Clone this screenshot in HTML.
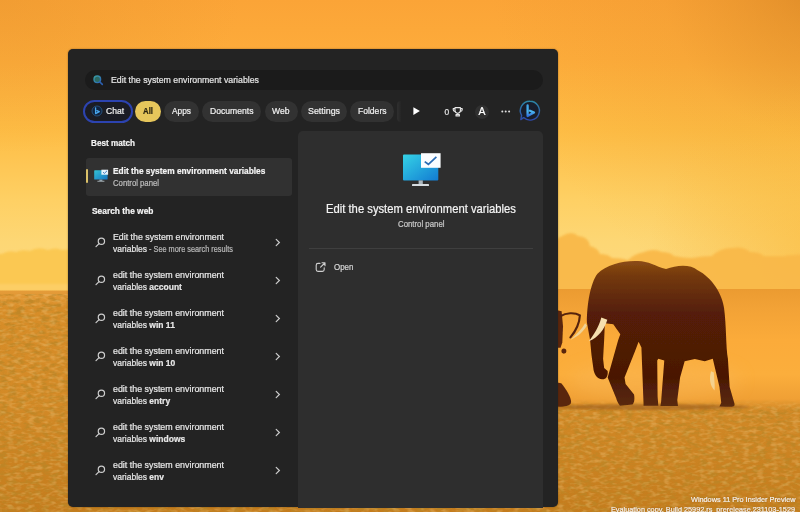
<!DOCTYPE html>
<html><head><meta charset="utf-8">
<style>
*{box-sizing:border-box;margin:0;padding:0}
html,body{width:800px;height:512px;overflow:hidden;background:#f6a638}
body{font-family:"Liberation Sans",sans-serif;position:relative;color:#fff}
#bg{position:absolute;left:0;top:0;width:800px;height:512px}
.a{position:absolute}
#panel{left:68.3px;top:49.3px;width:490.2px;height:458.2px;background:#232323;border-radius:5px;box-shadow:0 0 1.5px rgba(40,20,0,.6)}
#search{left:85px;top:70px;width:458px;height:19.5px;border-radius:10px;background:#1b1b1b}
.pill{top:101px;height:20.5px;border-radius:10.5px;background:#323232}
#right{left:298px;top:130.5px;width:245px;height:377px;background:#2e2e2e;border-radius:5px 5px 0 0}
#sel{left:85.5px;top:157.5px;width:206.5px;height:38px;background:#313131;border-radius:3px}
.t{position:absolute;white-space:nowrap;line-height:14px;transform-origin:0 50%;display:block;-webkit-text-stroke:.22px currentColor}
.t b{font-weight:bold}
#ui{position:absolute;left:0;top:0;width:800px;height:512px;filter:blur(.4px)}
.wm{position:absolute;right:4px;white-space:nowrap;font-size:8.6px;color:rgba(255,255,255,.85);text-shadow:0 0 2px rgba(90,50,0,.6);transform-origin:100% 50%;line-height:10px}
</style></head><body>
<svg id="bg" viewBox="0 0 800 512">
<defs>
<linearGradient id="sky" x1="0" y1="0" x2="0" y2="1">
<stop offset="0" stop-color="#fba437"/><stop offset="0.2" stop-color="#fdac3b"/><stop offset="0.445" stop-color="#febd45"/><stop offset="0.685" stop-color="#fed064"/><stop offset="0.83" stop-color="#fdd775"/><stop offset="1" stop-color="#fdd97f"/>
</linearGradient>
<linearGradient id="gnd" x1="0" y1="0" x2="0" y2="1">
<stop offset="0" stop-color="#e59c3a"/><stop offset="0.08" stop-color="#d78d28"/><stop offset="0.5" stop-color="#d38a27"/><stop offset="1" stop-color="#c47c1d"/>
</linearGradient>
<linearGradient id="dust" x1="0" y1="0" x2="0" y2="1">
<stop offset="0" stop-color="#eb9b31"/><stop offset="0.15" stop-color="#f2a236"/><stop offset="0.42" stop-color="#fbab3a"/><stop offset="0.7" stop-color="#fbae3c"/><stop offset="0.9" stop-color="#f0a035"/><stop offset="1" stop-color="#e89a34" stop-opacity="0"/>
</linearGradient>
<linearGradient id="dustx" x1="0" y1="0" x2="1" y2="0">
<stop offset="0" stop-color="#fff" stop-opacity="0"/><stop offset="0.12" stop-color="#fff" stop-opacity="1"/><stop offset="1" stop-color="#fff" stop-opacity="1"/>
</linearGradient>
<mask id="dm"><rect x="500" y="280" width="300" height="140" fill="url(#dustx)"/></mask>
<radialGradient id="cr" cx="830" cy="-30" r="340" gradientUnits="userSpaceOnUse"><stop offset="0" stop-color="#cc7c1e" stop-opacity=".68"/><stop offset="0.2" stop-color="#d08020" stop-opacity=".42"/><stop offset="0.5" stop-color="#d68624" stop-opacity=".13"/><stop offset="1" stop-color="#d68624" stop-opacity="0"/></radialGradient>
<radialGradient id="lv" cx="0" cy="0" r="1" gradientUnits="objectBoundingBox"><stop offset="0" stop-color="#e0902a" stop-opacity=".35"/><stop offset="0.3" stop-color="#e0902a" stop-opacity="0"/></radialGradient>
<radialGradient id="rv" cx="820" cy="250" r="170" gradientUnits="userSpaceOnUse"><stop offset="0" stop-color="#fbb838" stop-opacity=".6"/><stop offset="1" stop-color="#fbb838" stop-opacity="0"/></radialGradient>
<linearGradient id="el" x1="0" y1="0" x2="0" y2="1"><stop offset="0" stop-color="#8c4c14"/><stop offset="0.1" stop-color="#74390c"/><stop offset="0.35" stop-color="#551f07"/><stop offset="0.8" stop-color="#4a1805"/><stop offset="1" stop-color="#5a2a0c"/></linearGradient>
<filter id="nz" x="0" y="0" width="100%" height="100%"><feTurbulence type="fractalNoise" baseFrequency="0.12 0.26" numOctaves="3" seed="4"/><feColorMatrix values="0 0 0 0 0.50  0 0 0 0 0.24  0 0 0 0 0.02  3.4 0 0 0 -1.45"/></filter>
<filter id="nz2" x="0" y="0" width="100%" height="100%"><feTurbulence type="fractalNoise" baseFrequency="0.14 0.3" numOctaves="2" seed="11"/><feColorMatrix values="0 0 0 0 0.93  0 0 0 0 0.64  0 0 0 0 0.26  0 3 0 0 -1.35"/></filter>
<filter id="bl" x="-5%" y="-30%" width="110%" height="160%"><feGaussianBlur stdDeviation="1.2"/></filter>
<filter id="bl2" x="-30%" y="-100%" width="160%" height="300%"><feGaussianBlur stdDeviation="8"/></filter>
<filter id="bl3"><feGaussianBlur stdDeviation=".45"/></filter>
</defs>
<rect width="800" height="292" fill="url(#sky)"/>
<rect width="800" height="512" fill="url(#cr)"/>
<rect width="800" height="512" fill="url(#lv)"/>
<!-- distant trees -->
<rect x="600" y="60" width="200" height="232" fill="url(#rv)"/>
<path fill="#fbc750" opacity=".92" filter="url(#bl)" d="M-10 292V257q6-4 12-3 6-4 14-2 6-3 14-1 8-5 18-1 8-3 14 0 6-1 12 0V292Z"/>
<path fill="#f9b94a" opacity=".94" filter="url(#bl)" d="M550 292V250q4-12 12-14 10-6 16 0 10 0 12 10 8 2 10 8 8 0 12 4 10 0 16 2 6-6 16-8 10-4 18 0 8 0 12 4 10 2 18 2 10-2 20-2 8-8 20-8 12-2 18 4 10 0 14 4 10 0 20 0 12-2 40-2V292Z"/>
<g>
</g>
<rect x="-5" y="284" width="90" height="7" fill="#fdd273" opacity=".6" filter="url(#bl)"/>
<rect y="290.5" width="800" height="222" fill="url(#gnd)"/>
<rect y="294" width="800" height="218" filter="url(#nz)" opacity=".8"/>
<rect y="294" width="800" height="218" filter="url(#nz2)" opacity=".3"/>
<!-- dust band near elephants -->
<rect x="500" y="289" width="300" height="122" fill="url(#dust)" mask="url(#dm)"/>
<ellipse cx="655" cy="380" rx="85" ry="20" fill="#f9b552" opacity=".5" filter="url(#bl2)"/>
<!-- ground shadow -->
<ellipse cx="650" cy="407" rx="100" ry="3" fill="#8a4f12" opacity=".5" filter="url(#bl)"/>
<g transform="translate(550,239.44) scale(0.3516,0.3614)" filter="url(#bl3)">
<!-- second elephant (partial) -->
<g fill="#5a280a">
<path d="M20 196 L33 199 L37 240 L35 285 L30 300 L20 300Z"/>
<circle cx="39.5" cy="309" r="7"/>
<path d="M20 396 L32 398 C46 414 60 436 60 450 C58 462 40 464 20 462Z"/>
<path d="M30 212 C45 203 70 201 85 210 C84 230 76 250 58 271" fill="none" stroke="#55240a" stroke-width="6" stroke-linecap="round"/>
</g>
<!-- main elephant -->
<path fill="url(#el)" d="M164 364 C166 380 158 388 148 387 C136 386 128 378 124 362 L118 320 L114 278 L105 230 C105 180 115 120 135 95 C160 70 210 58 250 60 C280 60 300 75 330 82 C360 70 400 68 420 85 C460 105 490 150 495 190 C502 240 500 300 506 330 L511 408 L524 452 C528 464 520 463 500 463 L482 462 L487 452 L482 408 L463 330 L440 337 L412 331 L383 337 L370 382 L362 444 L364 461 L314 461 L316 449 L325 335 L308 330 L305 335 L306 434 L308 460 L266 460 L266 454 L260 299 L252 283 L242 309 L212 382 L215 400 L239 429 C242 445 238 455 234 457 L199 460 C192 452 190 445 188 439 L164 382 L194 278 L200 262 L180 235 L156 232 L154 278 L151 330 L154 356 Z"/>
<path fill="#f6dfae" d="M146 216 L163 222 C154 250 138 270 110 282 C126 262 138 244 146 216Z"/>
<path fill="#f0d296" d="M105 238 C95 255 80 268 58 278 C75 262 90 250 100 232Z"/>
<path fill="#f3d9a0" d="M458 365 C452 385 455 405 468 418 C470 400 466 385 466 368Z" opacity=".8"/>
</g>
</svg>
<div id="ui">
<div id="panel" class="a"></div>
<div id="search" class="a"></div>
<div id="right" class="a"></div>
<div id="sel" class="a"></div>
<div class="a" style="left:85.7px;top:169.2px;width:2.6px;height:14.3px;border-radius:1.3px;background:#dbc169"></div>
<div class="a" style="left:83px;top:99.5px;width:50px;height:23px;border-radius:11.5px;border:2px solid #2c43b0;background:#1b1c24"></div>
<div class="a pill" style="left:135px;width:26.3px;background:#e6c65b"></div>
<div class="a pill" style="left:164px;width:35px"></div>
<div class="a pill" style="left:202px;width:59px"></div>
<div class="a pill" style="left:264.5px;width:33px"></div>
<div class="a pill" style="left:300.5px;width:46.5px"></div>
<div class="a pill" style="left:350px;width:44px"></div>
<div class="a pill" style="left:396.6px;width:4.5px;border-radius:10.5px 0 0 10.5px/10.25px 0 0 10.25px;background:linear-gradient(90deg,#2e2e2e 20%,#252525)"></div>
<div class="a" style="left:475px;top:104.5px;width:14px;height:14px;border-radius:7px;background:#303030"></div>
<div class="a" style="left:309px;top:248px;width:224px;height:1px;background:#3f3f3f"></div>
<svg class="a" style="left:0;top:0" width="800" height="512" viewBox="0 0 800 512">
<defs>
<linearGradient id="mon" x1="0" y1="0" x2="1" y2="1"><stop offset="0" stop-color="#35d3e6"/><stop offset="1" stop-color="#127bd2"/></linearGradient>
<linearGradient id="bing" x1="0" y1="0" x2="0" y2="1"><stop offset="0" stop-color="#3fa6ea"/><stop offset="0.6" stop-color="#4ab4f0"/><stop offset="1" stop-color="#2f6fdc"/></linearGradient>
<linearGradient id="ring" x1="0" y1="0" x2="0" y2="1"><stop offset="0" stop-color="#2c86a6"/><stop offset="1" stop-color="#2d48a8"/></linearGradient>
<linearGradient id="srch" x1="0" y1="0" x2="1" y2="1"><stop offset="0" stop-color="#3a9fa0"/><stop offset="1" stop-color="#2b66b8"/></linearGradient>
</defs>
<!-- search icon -->
<circle cx="97.3" cy="79.3" r="3.3" fill="#2c6a62" stroke="url(#srch)" stroke-width="1.4"/>
<path d="M99.9 82 L102.3 84.4" stroke="#2b5fb0" stroke-width="1.6" stroke-linecap="round"/>
<!-- chat bing -->
<circle cx="97" cy="111" r="5" fill="#10233f" stroke="#2a5a8c" stroke-width=".8"/>
<path d="M95.6 107.8 V113.6 L99.3 111.6 L97 110.6" fill="none" stroke="#49a8f0" stroke-width="1.3" stroke-linejoin="round" stroke-linecap="round"/>
<!-- play -->
<path d="M413.4 107.2 L419.9 111.1 L413.4 115Z" fill="#fff"/>
<!-- trophy -->
<g fill="none" stroke="#e8e8e8" stroke-width="1.1" stroke-linejoin="round">
<path d="M455 107.6 H460.4 V110.6 C460.4 112.4 459 113.2 457.7 113.2 C456.4 113.2 455 112.4 455 110.6Z"/>
<path d="M455 108.6 H453.2 V109.8 C453.2 110.8 454 111.4 455 111.4 M460.4 108.6 H462.2 V109.8 C462.2 110.8 461.4 111.4 460.4 111.4"/>
<path d="M457.7 113.2 V114.4 M456 116 H459.4 V114.6 H456Z"/>
</g>
<!-- dots -->
<circle cx="502.3" cy="111.5" r="1" fill="#e0e0e0"/><circle cx="505.7" cy="111.5" r="1" fill="#e0e0e0"/><circle cx="509.1" cy="111.5" r="1" fill="#e0e0e0"/>
<!-- big bing -->
<path d="M530 101.3 A9.4 9.4 0 1 1 523.6 117.6 L520.8 119.6 L521.6 115.4 A9.4 9.4 0 0 1 530 101.3Z" fill="#181d2b" stroke="url(#ring)" stroke-width="1.4" stroke-linejoin="round"/>
<path d="M527.6 105.4 V116 L534 112.6 L530 110.8" fill="none" stroke="url(#bing)" stroke-width="2.3" stroke-linejoin="round" stroke-linecap="round"/>
<!-- small monitor icon -->
<rect x="94.2" y="170.3" width="13.4" height="9.3" rx=".6" fill="url(#mon)" opacity=".9"/>
<rect x="101.4" y="169.7" width="6.7" height="5" fill="#e6f2fa"/>
<path d="M103 172.2 L104.4 173.4 L107 170.8" stroke="#2a6cb5" stroke-width=".9" fill="none"/>
<rect x="99.4" y="179.6" width="3" height="1.4" fill="#8fa0aa"/><rect x="97.4" y="180.8" width="7" height=".9" fill="#a8b2b8"/>
<!-- big monitor icon -->
<rect x="403" y="154.4" width="35.3" height="26" rx="1" fill="url(#mon)"/>
<rect x="421" y="153.2" width="19.6" height="14.6" fill="#fbfdff"/>
<path d="M424.7 161.6 L428.4 164.3 L436.4 156.8" stroke="#2a6cb5" stroke-width="1.7" fill="none"/>
<rect x="418.6" y="180.4" width="4.2" height="3.8" fill="#aab6be"/><rect x="412" y="183.9" width="17" height="2.1" rx=".6" fill="#d6dce0"/>
<!-- magnifiers & chevrons -->
<g fill="none" stroke="#cdcdcd" stroke-width="1.2" stroke-linecap="round" id="mg">
<circle cx="101.4" cy="241.2" r="3.15"/><path d="M99.1 243.6 L96 246.7"/><path d="M276.2 239.3 L279.4 242.5 L276.2 245.7"/>
<circle cx="101.4" cy="279.2" r="3.15"/><path d="M99.1 281.6 L96 284.7"/><path d="M276.2 277.3 L279.4 280.5 L276.2 283.7"/>
<circle cx="101.4" cy="317.2" r="3.15"/><path d="M99.1 319.6 L96 322.7"/><path d="M276.2 315.3 L279.4 318.5 L276.2 321.7"/>
<circle cx="101.4" cy="355.2" r="3.15"/><path d="M99.1 357.6 L96 360.7"/><path d="M276.2 353.3 L279.4 356.5 L276.2 359.7"/>
<circle cx="101.4" cy="393.2" r="3.15"/><path d="M99.1 395.6 L96 398.7"/><path d="M276.2 391.3 L279.4 394.5 L276.2 397.7"/>
<circle cx="101.4" cy="431.2" r="3.15"/><path d="M99.1 433.6 L96 436.7"/><path d="M276.2 429.3 L279.4 432.5 L276.2 435.7"/>
<circle cx="101.4" cy="469.2" r="3.15"/><path d="M99.1 471.6 L96 474.7"/><path d="M276.2 467.3 L279.4 470.5 L276.2 473.7"/>
</g>
<!-- open icon -->
<g fill="none" stroke="#cfcfcf" stroke-width="1.1" stroke-linecap="round" stroke-linejoin="round">
<path d="M320 263.4 H318 Q316.2 263.4 316.2 265.2 V269.6 Q316.2 271.4 318 271.4 H322.4 Q324.2 271.4 324.2 269.6 V267.8"/>
<path d="M322 262.8 H325 V265.8 M324.8 263 L320.6 267.2"/>
</g>
</svg>
<span class="t" style="left:444.6px;top:104.5px;font-size:8.4px;color:#e4e4e4">0</span>
<span class="t" style="left:478.4px;top:104.6px;font-size:10.4px;color:#fff">A</span>
<span class="t" style="left:110.75px;top:73.00px;font-size:9.6px;font-weight:400;color:#e4e4e4;transform:scaleX(0.9130);">Edit the system environment variables</span>
<span class="t" style="left:105.60px;top:104.00px;font-size:9.6px;font-weight:400;color:#f0f0f0;transform:scaleX(0.8882);">Chat</span>
<span class="t" style="left:143.00px;top:104.00px;font-size:9.4px;font-weight:700;color:#2a2410;transform:scaleX(0.8344);">All</span>
<span class="t" style="left:172.00px;top:104.00px;font-size:9.4px;font-weight:400;color:#f0f0f0;transform:scaleX(0.8889);">Apps</span>
<span class="t" style="left:210.00px;top:104.00px;font-size:9.4px;font-weight:400;color:#f0f0f0;transform:scaleX(0.9173);">Documents</span>
<span class="t" style="left:272.00px;top:104.00px;font-size:9.4px;font-weight:400;color:#f0f0f0;transform:scaleX(0.9158);">Web</span>
<span class="t" style="left:307.50px;top:104.00px;font-size:9.4px;font-weight:400;color:#f0f0f0;transform:scaleX(0.9446);">Settings</span>
<span class="t" style="left:357.50px;top:104.00px;font-size:9.4px;font-weight:400;color:#f0f0f0;transform:scaleX(0.9115);">Folders</span>
<span class="t" style="left:91.00px;top:136.00px;font-size:9.4px;font-weight:700;color:#f4f4f4;transform:scaleX(0.8705);">Best match</span>
<span class="t" style="left:112.50px;top:163.50px;font-size:9.6px;font-weight:700;color:#f4f4f4;transform:scaleX(0.8682);">Edit the system environment variables</span>
<span class="t" style="left:112.50px;top:176.00px;font-size:8.4px;font-weight:400;color:#bdbdbd;transform:scaleX(0.9232);">Control panel</span>
<span class="t" style="left:91.50px;top:203.50px;font-size:9.4px;font-weight:700;color:#f4f4f4;transform:scaleX(0.8927);">Search the web</span>
<span class="t" style="left:112.50px;top:229.80px;font-size:9.5px;font-weight:400;color:#e8e8e8;transform:scaleX(0.9261);">Edit the system environment</span>
<span class="t" style="left:112.50px;top:241.80px;font-size:9.5px;font-weight:400;color:#e8e8e8;transform:scaleX(0.8940);">variables<span style="color:#b8b8b8;font-size:8.2px"> - See more search results</span></span>
<span class="t" style="left:112.50px;top:267.80px;font-size:9.5px;font-weight:400;color:#e8e8e8;transform:scaleX(0.9342);">edit the system environment</span>
<span class="t" style="left:112.50px;top:279.80px;font-size:9.5px;font-weight:400;color:#e8e8e8;transform:scaleX(0.8940);">variables <b>account</b></span>
<span class="t" style="left:112.50px;top:305.80px;font-size:9.5px;font-weight:400;color:#e8e8e8;transform:scaleX(0.9342);">edit the system environment</span>
<span class="t" style="left:112.50px;top:317.80px;font-size:9.5px;font-weight:400;color:#e8e8e8;transform:scaleX(0.8940);">variables <b>win 11</b></span>
<span class="t" style="left:112.50px;top:343.80px;font-size:9.5px;font-weight:400;color:#e8e8e8;transform:scaleX(0.9342);">edit the system environment</span>
<span class="t" style="left:112.50px;top:355.80px;font-size:9.5px;font-weight:400;color:#e8e8e8;transform:scaleX(0.8940);">variables <b>win 10</b></span>
<span class="t" style="left:112.50px;top:381.80px;font-size:9.5px;font-weight:400;color:#e8e8e8;transform:scaleX(0.9342);">edit the system environment</span>
<span class="t" style="left:112.50px;top:393.80px;font-size:9.5px;font-weight:400;color:#e8e8e8;transform:scaleX(0.8940);">variables <b>entry</b></span>
<span class="t" style="left:112.50px;top:419.80px;font-size:9.5px;font-weight:400;color:#e8e8e8;transform:scaleX(0.9342);">edit the system environment</span>
<span class="t" style="left:112.50px;top:431.80px;font-size:9.5px;font-weight:400;color:#e8e8e8;transform:scaleX(0.8940);">variables <b>windows</b></span>
<span class="t" style="left:112.50px;top:457.80px;font-size:9.5px;font-weight:400;color:#e8e8e8;transform:scaleX(0.9342);">edit the system environment</span>
<span class="t" style="left:112.50px;top:469.80px;font-size:9.5px;font-weight:400;color:#e8e8e8;transform:scaleX(0.8940);">variables <b>env</b></span>
<span class="t" style="left:325.50px;top:202.00px;font-size:12.4px;font-weight:400;color:#f4f4f4;transform:scaleX(0.9075);">Edit the system environment variables</span>
<span class="t" style="left:397.50px;top:217.40px;font-size:8.4px;font-weight:400;color:#c8c8c8;transform:scaleX(0.9332);">Control panel</span>
<span class="t" style="left:333.80px;top:260.00px;font-size:8.6px;font-weight:400;color:#d4d4d4;transform:scaleX(0.9224);">Open</span>
<span class="t" style="left:690.50px;top:493.00px;font-size:7.6px;font-weight:400;color:rgba(255,255,255,.88);transform:scaleX(0.9609);text-shadow:0 0 1.5px rgba(90,50,0,.7);">Windows 11 Pro Insider Preview</span>
<span class="t" style="left:611.00px;top:502.70px;font-size:7.6px;font-weight:400;color:rgba(255,255,255,.88);transform:scaleX(0.9572);text-shadow:0 0 1.5px rgba(90,50,0,.7);">Evaluation copy. Build 25992.rs_prerelease.231103-1529</span>
</div>
</body></html>
